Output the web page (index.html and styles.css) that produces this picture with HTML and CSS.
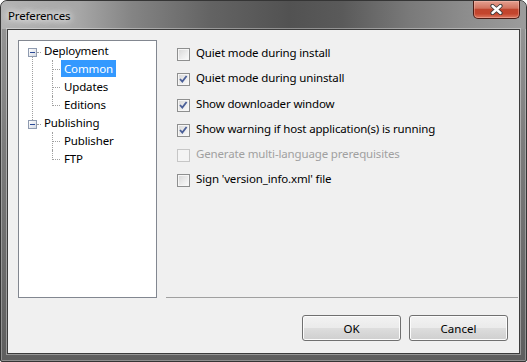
FILE: index.html
```html
<!DOCTYPE html>
<html lang="en">
<head>
    <meta charset="utf-8">
    <title>Preferences</title>
    <link rel="stylesheet" href="styles.css">
</head>
<body>
    <div class="window">
        <div class="titlebar">
            <span class="title">Preferences</span>
            <button class="close" type="button" aria-label="Close">
                <svg width="13" height="11" viewBox="0 0 13 11">
                    <path d="M2.5 2 L10.5 9 M10.5 2 L2.5 9" stroke="#3a3a3a" stroke-width="4.2" stroke-linecap="round"/>
                    <path d="M2.5 2 L10.5 9 M10.5 2 L2.5 9" stroke="#ffffff" stroke-width="2.4" stroke-linecap="round"/>
                </svg>
            </button>
        </div>

        <div class="client">
            <div class="main">
                <ul class="tree">
                    <li class="node">
                        <div class="row">
                            <span class="toggle"></span>
                            <span class="dots"></span>
                            <span class="label">Deployment</span>
                        </div>
                        <ul class="children">
                            <li><span class="label selected">Common</span></li>
                            <li><span class="label">Updates</span></li>
                            <li><span class="label">Editions</span></li>
                        </ul>
                    </li>
                    <li class="node">
                        <div class="row">
                            <span class="toggle"></span>
                            <span class="dots"></span>
                            <span class="label">Publishing</span>
                        </div>
                        <ul class="children">
                            <li><span class="label">Publisher</span></li>
                            <li><span class="label">FTP</span></li>
                        </ul>
                    </li>
                </ul>

                <div class="options">
                    <label class="option">
                        <span class="box"></span>
                        Quiet mode during install
                    </label>
                    <label class="option">
                        <span class="box"><svg width="11" height="11" viewBox="0 0 11 11"><path d="M2 5 L4.3 7.6 L8.6 2" fill="none" stroke="#4a5f98" stroke-width="1.8"/></svg></span>
                        Quiet mode during uninstall
                    </label>
                    <label class="option">
                        <span class="box"><svg width="11" height="11" viewBox="0 0 11 11"><path d="M2 5 L4.3 7.6 L8.6 2" fill="none" stroke="#4a5f98" stroke-width="1.8"/></svg></span>
                        Show downloader window
                    </label>
                    <label class="option">
                        <span class="box"><svg width="11" height="11" viewBox="0 0 11 11"><path d="M2 5 L4.3 7.6 L8.6 2" fill="none" stroke="#4a5f98" stroke-width="1.8"/></svg></span>
                        Show warning if host application(s) is running
                    </label>
                    <label class="option disabled">
                        <span class="box"></span>
                        Generate multi-language prerequisites
                    </label>
                    <label class="option">
                        <span class="box"></span>
                        Sign 'version_info.xml' file
                    </label>
                </div>
            </div>

            <div class="actions">
                <button class="btn" type="button">OK</button>
                <button class="btn" type="button">Cancel</button>
            </div>
        </div>
    </div>
</body>
</html>
```

FILE: styles.css
```css
* {
    margin: 0;
    padding: 0;
    box-sizing: border-box;
}

body {
    font-family: 'Segoe UI', 'Noto Sans', 'Open Sans', sans-serif;
    font-size: 11.5px;
    letter-spacing: -0.15px;
    color: #000;
    background: #ffffff;
}

.window {
    width: 527px;
    height: 362px;
    display: flex;
    flex-direction: column;
    border: 1px solid #353535;
    border-radius: 7px 7px 2px 2px;
    background: linear-gradient(#9a9a9a 0%, #7c7c7c 40%, #5e5e5e 100%);
    box-shadow: inset 0 0 0 1px rgba(255, 255, 255, 0.3);
    overflow: hidden;
}

/* glass caption */
.titlebar {
    height: 28px;
    display: flex;
    align-items: flex-start;
    background: linear-gradient(90deg, #b4b4b4 0%, #a6a6a6 15%, #848484 25%, #636363 40%, #525252 55%, #5a5a5a 65%, #7a7a7a 78%, #8c8c8c 88%, #9c9c9c 100%);
    border-radius: 6px 6px 0 0;
}

.title {
    padding: 7px 0 0 7px;
    line-height: 15px;
    text-shadow: 0 0 6px #fff, 0 0 10px #fff, 0 0 14px rgba(255, 255, 255, 0.8);
}

.close {
    width: 47px;
    height: 18px;
    margin: 0 6px 0 auto;
    display: flex;
    align-items: center;
    justify-content: center;
    border: 1px solid #4c1c14;
    border-top: none;
    border-radius: 0 0 5px 5px;
    background: linear-gradient(#e4a090 0%, #d27460 42%, #c0452e 50%, #c4452d 75%, #dc7a62 100%);
    box-shadow: inset 0 0 0 1px rgba(255, 210, 200, 0.35);
}

.client {
    flex: 1;
    margin: 0 6px 7px;
    display: flex;
    flex-direction: column;
    padding: 10px 1px 11px 10px;
    background: #f0f0f0;
    border: 1px solid #3c3c3c;
    box-shadow: 0 0 0 1px rgba(255, 255, 255, 0.35);
}

.main {
    display: flex;
    gap: 9px;
}

/* tree view */
.tree {
    width: 139px;
    height: 258px;
    list-style: none;
    padding-top: 1px;
    background: #fff;
    border: 1px solid #828790;
}

.node {
    position: relative;
}

.node:not(:last-child)::after {
    content: '';
    position: absolute;
    left: 13px;
    top: 15px;
    bottom: -6px;
    border-left: 1px dotted #a0a0a0;
}

.row {
    height: 18px;
    display: flex;
    align-items: flex-start;
    padding-left: 9px;
}

.toggle {
    width: 9px;
    height: 9px;
    margin-top: 6px;
    position: relative;
    border: 1px solid #8f9bb0;
    background: linear-gradient(135deg, #ffffff, #d4d9e2);
}

.toggle::after {
    content: '';
    position: absolute;
    left: 1px;
    top: 3px;
    width: 5px;
    height: 1px;
    background: #2a4a96;
}

.dots {
    width: 4px;
    margin-top: 10px;
    border-top: 1px dotted #a0a0a0;
}

.label {
    display: inline-block;
    height: 17px;
    line-height: 17px;
    padding: 0 3px;
    white-space: nowrap;
}

.label.selected {
    background: #3399ff;
    color: #fff;
}

.children {
    list-style: none;
    padding-left: 33px;
}

.children li {
    position: relative;
    height: 18px;
    padding-left: 9px;
}

.children li::before {
    content: '';
    position: absolute;
    left: 0;
    top: 0;
    bottom: 0;
    border-left: 1px dotted #a0a0a0;
}

.children li:last-child::before {
    bottom: auto;
    height: 10px;
}

.children li::after {
    content: '';
    position: absolute;
    left: 1px;
    top: 9px;
    width: 7px;
    border-top: 1px dotted #a0a0a0;
}

/* check list */
.options {
    flex: 1;
    padding: 8px 0 0 11px;
    border-bottom: 1px solid #a0a0a0;
}

.option {
    height: 25.3px;
    display: flex;
    align-items: flex-start;
    gap: 6px;
    line-height: 9px;
    white-space: nowrap;
}

.box {
    width: 13px;
    height: 13px;
    flex: none;
    display: flex;
    align-items: center;
    justify-content: center;
    border: 1px solid #8e8f8f;
    background: linear-gradient(135deg, #d6d6d6 0%, #ececec 55%, #fbfbfb 100%);
    box-shadow: inset 0 0 0 1px #f6f6f6;
}

.option.disabled {
    color: #a0a0a0;
}

.option.disabled .box {
    border-color: #c6c6c6;
    background: #f4f4f4;
    box-shadow: none;
}

/* dialog buttons */
.actions {
    margin-top: 17px;
    padding-right: 10px;
    display: flex;
    justify-content: flex-end;
    gap: 8px;
}

.btn {
    width: 99px;
    height: 26px;
    font: inherit;
    color: #000;
    border: 1px solid #707070;
    border-radius: 3px;
    background: linear-gradient(#f2f2f2 0%, #ebebeb 48%, #dddddd 52%, #cfcfcf 100%);
    box-shadow: inset 0 0 0 1px #fcfcfc;
}
```
